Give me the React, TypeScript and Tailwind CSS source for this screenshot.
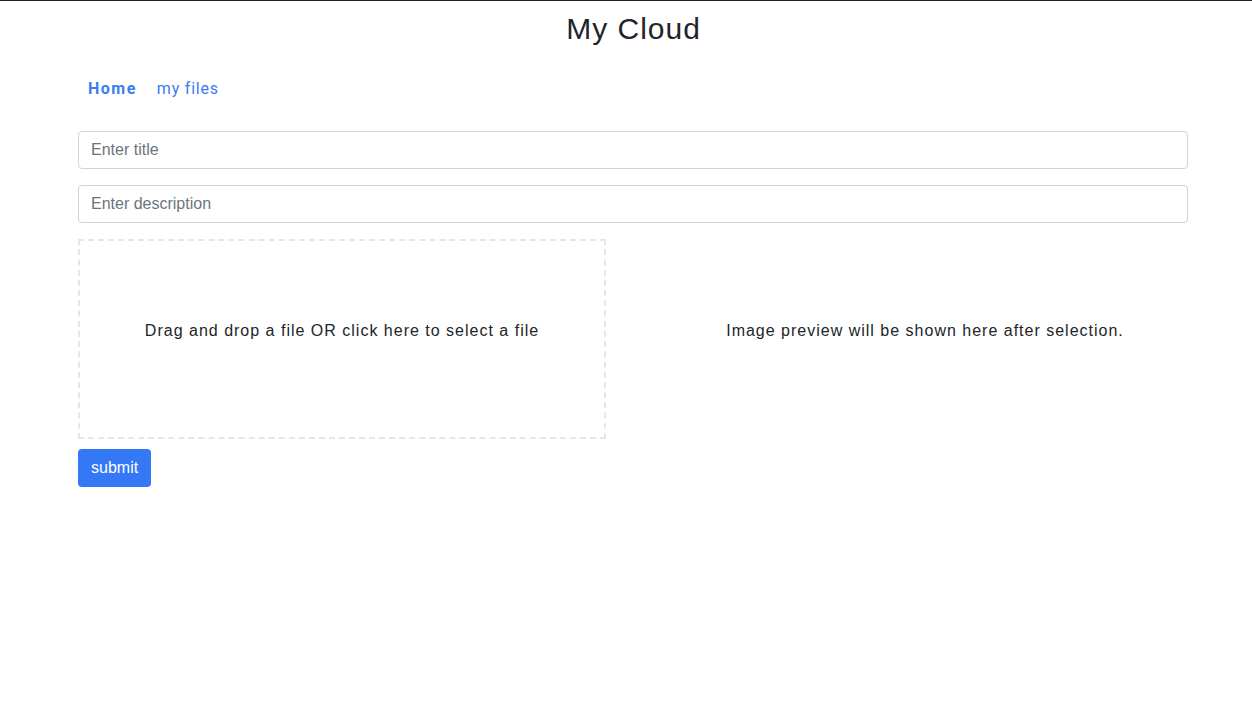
export default function App() {
  return (
    <div className="min-h-[705px] bg-white border-t border-[#222]">
      <h1 className="text-center text-[30px] leading-[36px] pt-[10px] pl-[15px] tracking-[1px] text-[#212529] font-['Liberation_Sans',Arial,sans-serif]">
        My Cloud
      </h1>
      <div className="w-[1110px] ml-[78px]">
        <nav className="flex items-center mt-[30px] ml-[10px] gap-[20px] font-['Roboto',sans-serif] text-[16px] leading-[24px] text-[#3b7cf2]">
          <span className="font-bold tracking-[1.5px]">Home</span>
          <span className="tracking-[0.8px]">my files</span>
        </nav>
        <div className="mt-[30px] flex flex-col gap-[16px] font-['Liberation_Sans',Arial,sans-serif]">
          <input
            placeholder="Enter title"
            className="h-[38px] w-full border border-[#ced4da] rounded-[4px] px-[12px] text-[16px] text-[#495057] placeholder:text-[#6c757d] outline-none"
          />
          <input
            placeholder="Enter description"
            className="h-[38px] w-full border border-[#ced4da] rounded-[4px] px-[12px] text-[16px] text-[#495057] placeholder:text-[#6c757d] outline-none"
          />
        </div>
        <div className="mt-[16px] flex gap-[56px] font-['Liberation_Sans',Arial,sans-serif] text-[16px] leading-[24px] tracking-[1px] text-[#212529]">
          <div className="w-[528px] h-[200px] border-2 border-dashed border-[#e6e6e6] flex justify-center pt-[78px]">
            Drag and drop a file OR click here to select a file
          </div>
          <div className="flex-1 flex justify-center pt-[80px]">
            Image preview will be shown here after selection.
          </div>
        </div>
        <button className="mt-[10px] h-[38px] px-[13px] bg-[#3478f6] text-white rounded-[4px] text-[16px] font-['Liberation_Sans',Arial,sans-serif]">
          submit
        </button>
      </div>
    </div>
  );
}
